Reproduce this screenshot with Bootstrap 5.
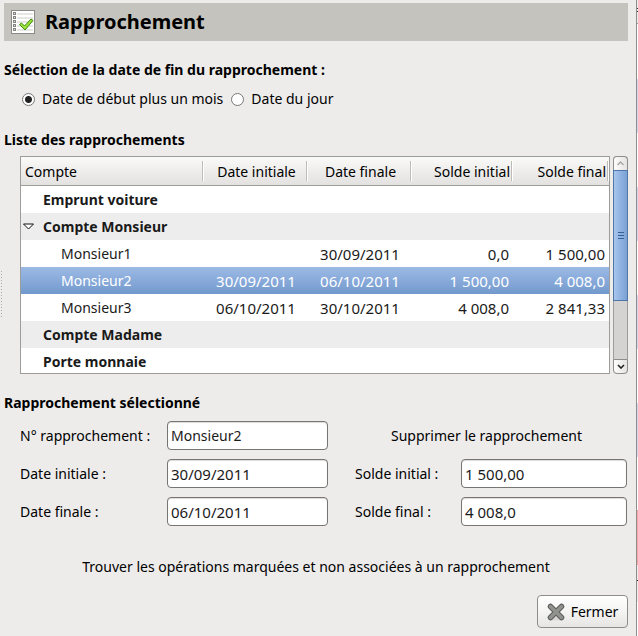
<!DOCTYPE html>
<html lang="fr">
<head>
<meta charset="utf-8">
<meta name="viewport" content="width=device-width, initial-scale=1">
<title>Rapprochement</title>
<link rel="stylesheet" href="https://cdn.jsdelivr.net/npm/bootstrap@5.3.0/dist/css/bootstrap.min.css">
<style>
body{font-family:"Noto Sans","Open Sans",sans-serif;font-size:14px;line-height:20px;background:#edeceb;color:#000}
.pane-grip{width:4px;padding-top:270px}
.pane-dots{height:47px;background:radial-gradient(circle,#aaa9a6 1px,transparent 1px) 0 0/3px 3px}
.window{padding:3px 8px 8px 0;min-width:0}
.neighbour{width:2px;border-left:1px solid #8e8e8b;background:linear-gradient(#edeceb 0 8px,#333 8px 9px,#edeceb 9px 11px,#333 11px 12px,#edeceb 12px 23px,#9d9c99 23px 24px,#fff 24px 79px,#d4d6f0 79px 133px,#fff 133px 187px,#d4d6f0 187px 241px,#fff 241px 295px,#d4d6f0 295px 349px,#fff 349px 403px,#d4d6f0 403px 457px,#fff 457px 510px,#f5a6a6 510px 565px,#edeceb 565px 580px,#222 580px 581px,#edeceb 581px 602px,#fff 602px)}
.title-bar{background:#c4c3bd;height:38px;padding-left:7px;gap:10px}
.title-bar h1{font-size:20px;line-height:28px;font-weight:700}
.section-title{font-size:14px;line-height:20px;font-weight:700;margin:0}
.date-choice{margin-top:19px}
.radios{margin:9px 0 21px 18px;gap:8px}
.radios label{gap:7px}
.form-check-input.gtk-radio{width:13px;height:13px;margin:0;border:1px solid #777;background-color:#fff;box-shadow:none}
.form-check-input.gtk-radio:checked{background-image:radial-gradient(circle,#222 0 3px,#fff 4px)}
.list-area{margin:6px 0 19px 16px;gap:3px}
.list-frame{border:1px solid #9d9c99;height:218px;overflow:hidden;background:#fff;min-width:0}
.accounts{table-layout:fixed;width:100%;border-collapse:separate;border-spacing:0}
.accounts th{height:29px;padding:1px 3px 0 4px;font-weight:400;white-space:nowrap;background:linear-gradient(90deg,#bdbcb9 0 1px,#fff 1px 2px) right center/2px 20px no-repeat,linear-gradient(#fafaf9,#eeedec 50%,#e3e2e0);border-bottom:1px solid #9d9c99}
.accounts td{height:27px;padding:1px 4px 0;color:#1a1a1a;white-space:nowrap}
.accounts .account-row td{font-weight:700}
.accounts .shaded td{background:#ededed}
.accounts .picked td{color:#fff;background:linear-gradient(#9cb9e4,#88aada 50%,#7199cb)}
.accounts .amount{font-size:15px}
.accounts .branch{padding-left:22px}
.accounts .leaf{padding-left:40px}
.accounts .has-toggle{padding-left:1px}
.toggle{width:13px;height:20px;margin-right:8px}
.col-name{width:183px}.col-date{width:104px}.col-start{width:101px}
.vbar{width:15px;background:#d4d3d1;border-radius:4px}
.vbar button{height:14px;border:1px solid #8e8d8a;background:linear-gradient(90deg,#fdfdfd,#e4e3e1)}
.vbar .arrow-up{border-radius:4px 4px 0 0;border-bottom:0}
.vbar .arrow-down{border-radius:0 0 4px 4px;height:15px}
.thumb{height:131px;border:1px solid #4f76a8;background:linear-gradient(90deg,#a9c6ec,#8fb2e1 50%,#7ba1d4)}
.trough{border:solid #9d9c99;border-width:0 1px}
.details{display:grid;grid-template-columns:147px minmax(0,33fr) 133px minmax(0,34fr);row-gap:9px;align-items:center;margin:8px 1px 0 16px}
.second{padding-left:27px}
.details .form-control{height:29px;padding:0 3px;font-size:14px;line-height:20px;border:1px solid #777572;border-radius:4px;box-shadow:inset 0 1px 1px #dddcda;color:#1a1a1a}
.details .form-control.amount{font-size:15px}
.delete-cell{grid-column:3/5;padding:0 9px 0 27px}
.flat{font-size:14px;line-height:20px;padding:4px;border:0;color:#000}
.find{margin-top:27px}
.close-btn{height:33px;width:91px;margin-top:14px;padding:0;gap:6px;font-size:14px;line-height:20px;border:1px solid #8e8d8a;border-radius:4px;background:linear-gradient(#fff,#f4f4f3 50%,#e6e5e3);color:#000}
</style>
</head>
<body>
<div class="d-flex min-vh-100">
<div class="pane-grip flex-shrink-0"><div class="pane-dots"></div></div>
<main class="window flex-grow-1">
<header class="title-bar d-flex align-items-center">
<svg width="24" height="24" viewBox="0 0 24 24" aria-hidden="true"><rect x=".5" y=".5" width="23" height="23" fill="#fff" stroke="#8a8a87"/><path d="M6 3h16v2H6zM6 7h16v2H6zM6 11h16v2H6zM6 15h16v2H6zM6 19h16v2H6z" fill="#e6e6e4"/><path d="M2 2h3v3H2zM2 6h3v3H2zM2 10h3v3H2zM2 14h3v3H2zM2 18h3v3H2z" fill="#858582"/><path d="M3 3h1v1H3zM3 7h1v1H3zM3 11h1v1H3zM3 15h1v1H3zM3 19h1v1H3z" fill="#ddd"/><path d="M8.5 14.5l2-1.500 3 3L20 9l2 1.500-8 9.500z" fill="#9be23c" stroke="#3f8a0a" stroke-linejoin="round"/></svg>
<h1 class="m-0">Rapprochement</h1>
</header>
<h2 class="section-title date-choice">Sélection de la date de fin du rapprochement :</h2>
<div class="radios d-flex">
<label class="d-flex align-items-center"><input class="form-check-input gtk-radio" type="radio" name="end" checked>Date de début plus un mois</label>
<label class="d-flex align-items-center"><input class="form-check-input gtk-radio" type="radio" name="end">Date du jour</label>
</div>
<h2 class="section-title">Liste des rapprochements</h2>
<div class="list-area d-flex">
<div class="list-frame flex-grow-1">
<table class="accounts">
<colgroup><col class="col-name"><col class="col-date"><col class="col-date"><col class="col-start"><col></colgroup>
<thead><tr><th scope="col">Compte</th><th scope="col" class="text-center">Date initiale</th><th scope="col" class="text-center">Date finale</th><th scope="col" class="text-end">Solde initial</th><th scope="col" class="text-end">Solde final</th></tr></thead>
<tbody>
<tr class="account-row"><td class="branch" colspan="5">Emprunt voiture</td></tr>
<tr class="account-row shaded"><td class="has-toggle" colspan="5"><div class="d-flex align-items-center"><button type="button" class="toggle btn p-0 border-0 d-flex align-items-center" aria-label="Replier Compte Monsieur" aria-expanded="true"><svg width="13" height="8" viewBox="0 0 13 8"><path d="M1.5 1h10l-5 5z" fill="#fff" stroke="#111"/></svg></button>Compte Monsieur</div></td></tr>
<tr><td class="leaf">Monsieur1</td><td></td><td class="text-center amount">30/09/2011</td><td class="text-end amount">0,0</td><td class="text-end amount">1 500,00</td></tr>
<tr class="picked" aria-selected="true"><td class="leaf">Monsieur2</td><td class="text-center amount">30/09/2011</td><td class="text-center amount">06/10/2011</td><td class="text-end amount">1 500,00</td><td class="text-end amount">4 008,0</td></tr>
<tr><td class="leaf">Monsieur3</td><td class="text-center amount">06/10/2011</td><td class="text-center amount">30/10/2011</td><td class="text-end amount">4 008,0</td><td class="text-end amount">2 841,33</td></tr>
<tr class="account-row shaded"><td class="branch" colspan="5">Compte Madame</td></tr>
<tr class="account-row"><td class="branch" colspan="5">Porte monnaie</td></tr>
</tbody>
</table>
</div>
<div class="vbar d-flex flex-column flex-shrink-0">
<button type="button" class="arrow-up p-0 d-flex align-items-center justify-content-center" aria-label="Défiler vers le haut"><svg width="7" height="5" viewBox="0 0 7 5"><path d="M.5 4l3-3 3 3" fill="none" stroke="#aaa9a6" stroke-width="1.5"/></svg></button>
<div class="thumb d-flex align-items-center justify-content-center"><svg width="6" height="8" viewBox="0 0 6 8"><path d="M0 .5h6M0 3.5h6M0 6.5h6" stroke="#365f95"/></svg></div>
<div class="trough flex-grow-1"></div>
<button type="button" class="arrow-down p-0 d-flex align-items-center justify-content-center" aria-label="Défiler vers le bas"><svg width="8" height="5" viewBox="0 0 8 5"><path d="M1 1l3 3 3-3" fill="none" stroke="#222" stroke-width="1.6"/></svg></button>
</div>
</div>
<h2 class="section-title">Rapprochement sélectionné</h2>
<form class="details">
<label for="num">N° rapprochement :</label><input id="num" class="form-control" type="text" value="Monsieur2">
<div class="delete-cell d-flex justify-content-center"><button type="button" class="btn flat">Supprimer le rapprochement</button></div>
<label for="d1">Date initiale :</label><input id="d1" class="form-control amount" type="text" value="30/09/2011">
<label for="s1" class="second">Solde initial :</label><input id="s1" class="form-control amount" type="text" value="1 500,00">
<label for="d2">Date finale :</label><input id="d2" class="form-control amount" type="text" value="06/10/2011">
<label for="s2" class="second">Solde final :</label><input id="s2" class="form-control amount" type="text" value="4 008,0">
</form>
<div class="find d-flex justify-content-center"><button type="button" class="btn flat">Trouver les opérations marquées et non associées à un rapprochement</button></div>
<div class="d-flex justify-content-end"><button type="button" class="btn close-btn d-flex align-items-center justify-content-center"><svg width="18" height="18" viewBox="0 0 18 18" aria-hidden="true"><ellipse cx="9.500" cy="15.500" rx="8" ry="2" fill="#d8d7d5"/><path d="M3.500 3.500l11 11M14.500 3.500l-11 11" stroke="#5b5d59" stroke-width="5.500" stroke-linecap="round"/><path d="M3.500 3.500l11 11M14.500 3.500l-11 11" stroke="#90928e" stroke-width="3.500" stroke-linecap="round"/></svg>Fermer</button></div>
</main>
<div class="neighbour flex-shrink-0"></div>
</div>
<script src="https://cdn.jsdelivr.net/npm/bootstrap@5.3.0/dist/js/bootstrap.bundle.min.js"></script>
</body>
</html>
